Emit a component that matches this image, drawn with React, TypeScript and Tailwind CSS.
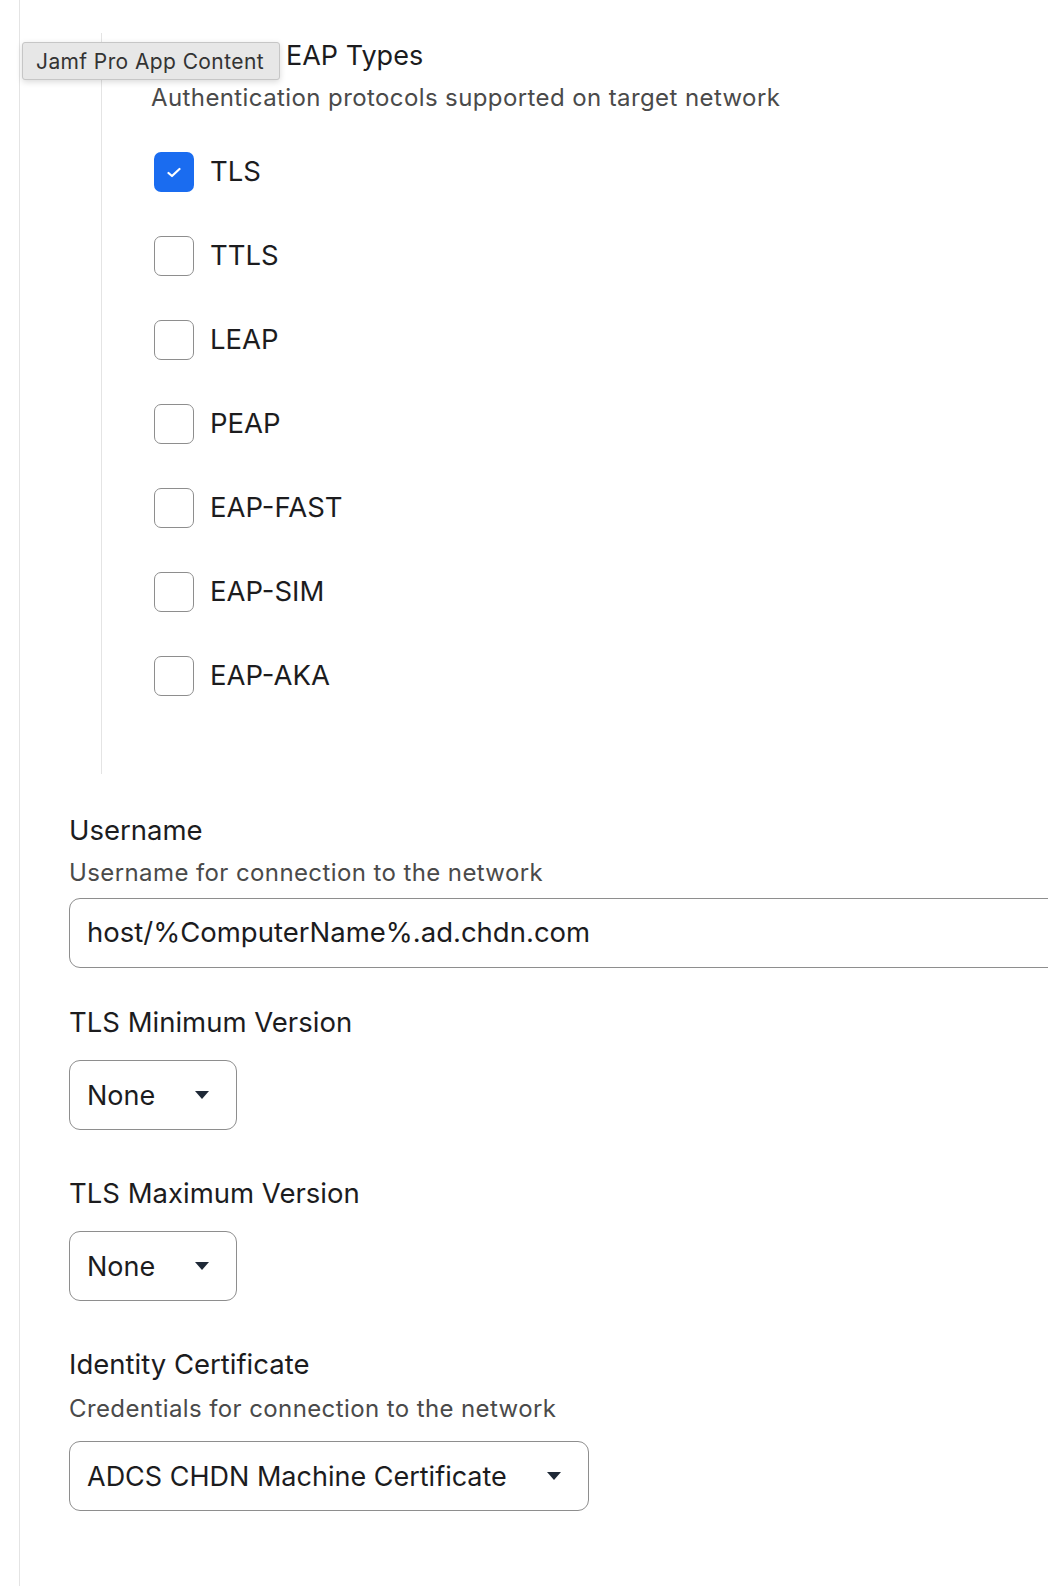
import React from "react";

const EAP = ["TLS", "TTLS", "LEAP", "PEAP", "EAP-FAST", "EAP-SIM", "EAP-AKA"];

function Arrow() {
  return (
    <svg width="14" height="8" viewBox="0 0 14 8" className="shrink-0">
      <path d="M0 0 H14 L7 8 Z" fill="#1f2937" />
    </svg>
  );
}

function Select({ value }: { value: string }) {
  return (
    <div className="inline-flex items-center h-[70px] pl-[17px] pr-[27px] gap-[40px] border-[1.5px] border-[#8e8e8e] rounded-[11px] bg-white">
      <span className="text-[27px] text-[#1c1c1e] leading-none">{value}</span>
      <Arrow />
    </div>
  );
}

function Checkbox({ checked }: { checked: boolean }) {
  if (checked) {
    return (
      <div className="w-[40px] h-[40px] rounded-[7px] bg-[#1a6cf0] flex items-center justify-center shrink-0">
        <svg width="14" height="11" viewBox="0 0 14 11">
          <path d="M1.5 6 L5 9 L12.5 2" fill="none" stroke="white" strokeWidth="2.2" strokeLinecap="round" strokeLinejoin="round" />
        </svg>
      </div>
    );
  }
  return <div className="w-[40px] h-[40px] rounded-[7px] border-[1.5px] border-[#8e8e8e] bg-white shrink-0" />;
}

export default function App() {
  return (
    <div className="relative w-[1048px] h-[1586px] overflow-hidden bg-white font-['Inter','Noto_Sans',sans-serif]">
      <div className="ml-[19px] h-full border-l border-[#e4e4e4]">
        {/* EAP section */}
        <div className="ml-[81px] pt-[33px]">
          <div className="h-[741px] border-l border-[#e4e4e4] pl-[49px] pt-[7px]">
            <div className="text-[27px] leading-[32px] text-[#1c1c1e] ml-[135px]">EAP Types</div>
            <div className="mt-[10px] text-[24px] leading-[32px] text-[#4a4a4a] tracking-[0.4px]">
              Authentication protocols supported on target network
            </div>
            <div className="mt-[38px] flex flex-col gap-[44px]">
              {EAP.map((t, i) => (
                <div key={t} className="flex items-center h-[40px] ml-[3px] gap-[16px]">
                  <Checkbox checked={i === 0} />
                  <span className="text-[27.5px] leading-none text-[#1c1c1e]">{t}</span>
                </div>
              ))}
            </div>
          </div>
        </div>

        {/* Lower fields */}
        <div className="pl-[49px]">
          <div className="mt-[40px] text-[27.5px] leading-[32px] text-[#1c1c1e]">Username</div>
          <div className="mt-[11px] text-[24px] leading-[32px] text-[#4a4a4a] tracking-[0.4px]">
            Username for connection to the network
          </div>
          <div className="mt-[9px] w-[1000px] h-[70px] border-[1.5px] border-[#8e8e8e] rounded-[11px] flex items-center pl-[17px]">
            <span className="text-[27.5px] leading-none text-[#1c1c1e]">host/%ComputerName%.ad.chdn.com</span>
          </div>

          <div className="mt-[38px] text-[27.5px] leading-[32px] text-[#1c1c1e]">TLS Minimum Version</div>
          <div className="mt-[22px]">
            <Select value="None" />
          </div>

          <div className="mt-[47px] text-[27.5px] leading-[32px] text-[#1c1c1e]">TLS Maximum Version</div>
          <div className="mt-[22px]">
            <Select value="None" />
          </div>

          <div className="mt-[47px] text-[27.5px] leading-[32px] text-[#1c1c1e]">Identity Certificate</div>
          <div className="mt-[13px] text-[24px] leading-[32px] text-[#4a4a4a] tracking-[0.4px]">
            Credentials for connection to the network
          </div>
          <div className="mt-[16px]">
            <Select value="ADCS CHDN Machine Certificate" />
          </div>
        </div>
      </div>

      {/* Tooltip overlay */}
      <div className="absolute left-[22px] top-[42px] w-[258px] h-[38px] bg-[#e7e7e7] border border-[#c6c6c6] rounded-[3px] shadow-[0_2px_6px_rgba(0,0,0,0.15)] flex items-center pl-[13px]">
        <span className="text-[21px] leading-none text-[#333333] tracking-[0.4px]">Jamf Pro App Content</span>
      </div>
    </div>
  );
}
